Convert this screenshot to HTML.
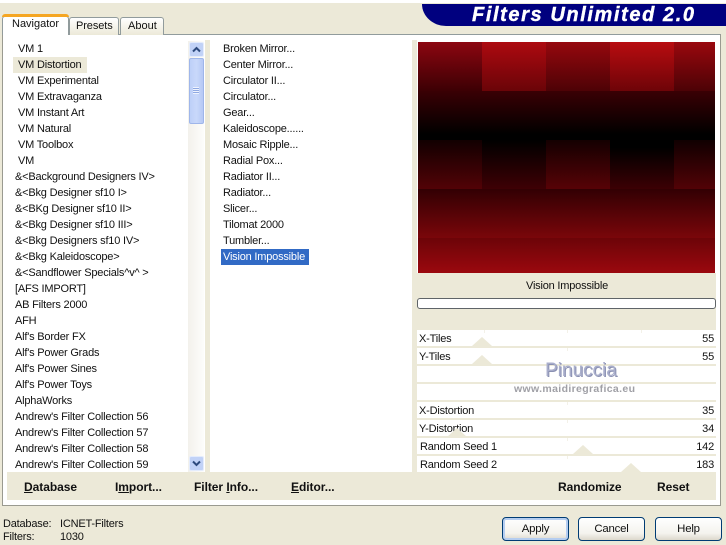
<!DOCTYPE html>
<html><head><meta charset="utf-8"><style>
html,body{margin:0;padding:0}
body{width:726px;height:543px;position:relative;overflow:hidden;background:#ece9d8;font-family:"Liberation Sans",sans-serif;font-size:11px;letter-spacing:-.2px;color:#111}
div,span{position:absolute;box-sizing:border-box}
.t{white-space:nowrap;line-height:16px;height:16px}
.b{font-weight:bold;font-size:12px;letter-spacing:-.05px;color:#111;white-space:nowrap;line-height:16px}
.u{position:static;text-decoration:underline}
.row{left:417px;width:299px;height:16px;background:#fff}
.row .l{left:2px;top:1px;line-height:16px;white-space:nowrap}
.row .r{right:2px;top:1px;line-height:16px}
.tri{width:0;height:0;border-left:10px solid transparent;border-right:10px solid transparent;border-bottom:9px solid #ece9d8}
.tick{width:1px;height:3px;background:#f3f1e8;top:0}
.btn{top:517px;height:24px;border:1px solid #003c74;border-radius:4px;background:linear-gradient(#fff,#f4f3ee 70%,#dcd8cc);text-align:center;line-height:22px;font-size:11.4px}
.cell{position:absolute}
</style></head><body>
<div style="left:0;top:0;width:726px;height:3px;background:#fff"></div>
<div style="left:422px;top:4px;width:304px;height:22px;background:#00007f;border-bottom-left-radius:24px 22px"></div>
<div class="t" style="left:472px;top:4px;height:22px;color:#fff;font:italic bold 20px/22px 'Liberation Sans',sans-serif;letter-spacing:1.6px;-webkit-text-stroke:.4px #fff">Filters Unlimited 2.0</div>

<div style="left:2px;top:34px;width:719px;height:472px;background:#fff;border:1px solid #9a9a90;border-top-color:#919b9c"></div>
<div style="left:2px;top:16px;width:67px;height:19px;background:#fff;border:1px solid #919b9c;border-bottom:0;border-radius:3px 3px 0 0"></div>
<div style="left:2px;top:14px;width:67px;height:3px;background:#f5a623;border-radius:3px 3px 0 0"></div>
<div class="t" style="left:12px;top:16px;letter-spacing:0">Navigator</div>
<div style="left:69px;top:17px;width:50px;height:18px;background:linear-gradient(#fff,#ece9d8);border:1px solid #919b9c;border-bottom:0;border-radius:3px 3px 0 0"></div>
<div class="t" style="left:76px;top:18px;letter-spacing:-.1px">Presets</div>
<div style="left:120px;top:17px;width:44px;height:18px;background:linear-gradient(#fff,#ece9d8);border:1px solid #919b9c;border-bottom:0;border-radius:3px 3px 0 0"></div>
<div class="t" style="left:128px;top:18px;letter-spacing:0">About</div>

<div style="left:13px;top:57px;width:74px;height:16px;background:#ece9d8"></div>
<div class="t" style="left:18px;top:41px">VM 1</div>
<div class="t" style="left:18px;top:57px">VM Distortion</div>
<div class="t" style="left:18px;top:73px">VM Experimental</div>
<div class="t" style="left:18px;top:89px">VM Extravaganza</div>
<div class="t" style="left:18px;top:105px">VM Instant Art</div>
<div class="t" style="left:18px;top:121px">VM Natural</div>
<div class="t" style="left:18px;top:137px">VM Toolbox</div>
<div class="t" style="left:18px;top:153px">VM</div>
<div class="t" style="left:15px;top:169px">&amp;&lt;Background Designers IV&gt;</div>
<div class="t" style="left:15px;top:185px">&amp;&lt;Bkg Designer sf10 I&gt;</div>
<div class="t" style="left:15px;top:201px">&amp;&lt;BKg Designer sf10 II&gt;</div>
<div class="t" style="left:15px;top:217px">&amp;&lt;Bkg Designer sf10 III&gt;</div>
<div class="t" style="left:15px;top:233px">&amp;&lt;Bkg Designers sf10 IV&gt;</div>
<div class="t" style="left:15px;top:249px">&amp;&lt;Bkg Kaleidoscope&gt;</div>
<div class="t" style="left:15px;top:265px">&amp;&lt;Sandflower Specials^v^ &gt;</div>
<div class="t" style="left:15px;top:281px">[AFS IMPORT]</div>
<div class="t" style="left:15px;top:297px">AB Filters 2000</div>
<div class="t" style="left:15px;top:313px">AFH</div>
<div class="t" style="left:15px;top:329px">Alf's Border FX</div>
<div class="t" style="left:15px;top:345px">Alf's Power Grads</div>
<div class="t" style="left:15px;top:361px">Alf's Power Sines</div>
<div class="t" style="left:15px;top:377px">Alf's Power Toys</div>
<div class="t" style="left:15px;top:393px">AlphaWorks</div>
<div class="t" style="left:15px;top:409px">Andrew's Filter Collection 56</div>
<div class="t" style="left:15px;top:425px">Andrew's Filter Collection 57</div>
<div class="t" style="left:15px;top:441px">Andrew's Filter Collection 58</div>
<div class="t" style="left:15px;top:457px">Andrew's Filter Collection 59</div>

<div style="left:188px;top:41px;width:16px;height:431px;background:linear-gradient(90deg,#f3f1ec,#fdfdfb)"></div>
<div style="left:189px;top:42px;width:15px;height:15px;background:#c1d2f7;border:1px solid #e4ecfc;border-radius:2px"></div>
<svg style="position:absolute;left:189px;top:42px" width="15" height="15"><path d="M4 9.5L7.5 6L11 9.5" fill="none" stroke="#2d4a7d" stroke-width="2"/></svg>
<div style="left:189px;top:58px;width:15px;height:66px;background:linear-gradient(90deg,#bdd0f8,#c9d8fa 50%,#b6c9f5);border:1px solid #9fb6ea;border-radius:2px"></div>
<div style="left:193px;top:87px;width:6px;height:7px;background:repeating-linear-gradient(#eef3fe 0 1px,#8fa9e2 1px 2px)"></div>
<div style="left:189px;top:456px;width:15px;height:15px;background:#c1d2f7;border:1px solid #e4ecfc;border-radius:2px"></div>
<svg style="position:absolute;left:189px;top:456px" width="15" height="15"><path d="M4 5.5L7.5 9L11 5.5" fill="none" stroke="#2d4a7d" stroke-width="2"/></svg>

<div style="left:205px;top:40px;width:5px;height:432px;background:#ece9d8"></div>
<div style="left:412px;top:40px;width:5px;height:460px;background:#ece9d8"></div>

<div class="t" style="left:223px;top:41px">Broken Mirror...</div>
<div class="t" style="left:223px;top:57px">Center Mirror...</div>
<div class="t" style="left:223px;top:73px">Circulator II...</div>
<div class="t" style="left:223px;top:89px">Circulator...</div>
<div class="t" style="left:223px;top:105px">Gear...</div>
<div class="t" style="left:223px;top:121px">Kaleidoscope......</div>
<div class="t" style="left:223px;top:137px">Mosaic Ripple...</div>
<div class="t" style="left:223px;top:153px">Radial Pox...</div>
<div class="t" style="left:223px;top:169px">Radiator II...</div>
<div class="t" style="left:223px;top:185px">Radiator...</div>
<div class="t" style="left:223px;top:201px">Slicer...</div>
<div class="t" style="left:223px;top:217px">Tilomat 2000</div>
<div class="t" style="left:223px;top:233px">Tumbler...</div>
<div style="left:221px;top:249px;width:88px;height:16px;background:#316ac5"></div>
<div class="t" style="left:223px;top:249px;color:#fff">Vision Impossible</div>

<div style="left:418px;top:42px;width:297px;height:231px;background:#000;overflow:hidden">
<div class="cell" style="left:0;top:0;width:64px;height:49px;background:linear-gradient(#8c0610,#3c0004)"></div>
<div class="cell" style="left:64px;top:0;width:64px;height:49px;background:linear-gradient(#ad0a10,#6a0408)"></div>
<div class="cell" style="left:128px;top:0;width:64px;height:49px;background:linear-gradient(#96080e,#4d0206)"></div>
<div class="cell" style="left:192px;top:0;width:64px;height:49px;background:linear-gradient(#b80c10,#6e0408)"></div>
<div class="cell" style="left:256px;top:0;width:41px;height:49px;background:linear-gradient(#9a080e,#4c0206)"></div>
<div class="cell" style="left:0;top:49px;width:297px;height:49px;background:linear-gradient(#3a0004,#000 88%)"></div>
<div class="cell" style="left:0;top:98px;width:64px;height:49px;background:linear-gradient(#120001,#520206)"></div>
<div class="cell" style="left:64px;top:98px;width:64px;height:49px;background:linear-gradient(#000,#3e0004)"></div>
<div class="cell" style="left:128px;top:98px;width:64px;height:49px;background:linear-gradient(#140001,#570206)"></div>
<div class="cell" style="left:192px;top:98px;width:64px;height:49px;background:linear-gradient(#000 15%,#3c0004)"></div>
<div class="cell" style="left:256px;top:98px;width:41px;height:49px;background:linear-gradient(#100001,#520206)"></div>
<div class="cell" style="left:0;top:147px;width:297px;height:49px;background:linear-gradient(#320003,#7a060a)"></div>
<div class="cell" style="left:0;top:196px;width:297px;height:35px;background:linear-gradient(#6c0408,#9b080e)"></div>
</div>

<div style="left:417px;top:273px;width:299px;height:199px;background:#ece9d8"></div>
<div class="t" style="left:526px;top:278px">Vision Impossible</div>
<div style="left:417px;top:298px;width:299px;height:11px;background:#fff;border:1px solid #5f6468;border-radius:3px"></div>

<div class="row" style="top:330px"><span class="l">X-Tiles</span><span class="r">55</span><span class="tick" style="left:67px"></span><span class="tick" style="left:150px"></span><span class="tick" style="left:224px"></span></div>
<div class="row" style="top:348px"><span class="l">Y-Tiles</span><span class="r">55</span><span class="tick" style="left:150px"></span></div>
<div class="row" style="top:366px"></div>
<div class="row" style="top:384px"></div>
<div class="row" style="top:402px"><span class="l">X-Distortion</span><span class="r">35</span><span class="tick" style="left:150px"></span></div>
<div class="row" style="top:420px"><span class="l">Y-Distortion</span><span class="r">34</span><span class="tick" style="left:150px"></span></div>
<div class="row" style="top:438px"><span class="l" style="left:3px">Random Seed 1</span><span class="r">142</span><span class="tick" style="left:150px"></span></div>
<div class="row" style="top:456px"><span class="l" style="left:3px">Random Seed 2</span><span class="r">183</span><span class="tick" style="left:150px"></span></div>
<div class="tri" style="left:472px;top:337px"></div>
<div class="tri" style="left:472px;top:355px"></div>
<div class="tri" style="left:447px;top:428px"></div>
<div class="tri" style="left:573px;top:445px"></div>
<div class="tri" style="left:621px;top:463px"></div>

<div style="left:545px;top:360px;font:normal 19px/22px 'Liberation Sans',sans-serif;color:#a9aecb;text-shadow:1px 1px 0 #8a90b2;white-space:nowrap;letter-spacing:0">Pinuccia</div>
<div style="left:514px;top:382px;font:bold 10.5px/14px 'Liberation Sans',sans-serif;color:#a0a0a6;white-space:nowrap;letter-spacing:.35px">www.maidiregrafica.eu</div>

<div style="left:7px;top:472px;width:405px;height:28px;background:#ece9d8"></div>
<div style="left:417px;top:472px;width:299px;height:28px;background:#ece9d8"></div>
<div class="b" style="left:24px;top:479px"><span class="u">D</span>atabase</div>
<div class="b" style="left:115px;top:479px">I<span class="u">m</span>port...</div>
<div class="b" style="left:194px;top:479px">Filter <span class="u">I</span>nfo...</div>
<div class="b" style="left:291px;top:479px"><span class="u">E</span>ditor...</div>
<div class="b" style="left:558px;top:479px">Randomize</div>
<div class="b" style="left:657px;top:479px">Reset</div>

<div class="t" style="left:3px;top:516px">Database:</div>
<div class="t" style="left:60px;top:516px">ICNET-Filters</div>
<div class="t" style="left:3px;top:529px">Filters:</div>
<div class="t" style="left:60px;top:529px">1030</div>

<div class="btn" style="left:502px;width:67px;box-shadow:inset 0 0 0 2px #b5cdf0">Apply</div>
<div class="btn" style="left:578px;width:67px">Cancel</div>
<div class="btn" style="left:655px;width:67px">Help</div>
</body></html>
